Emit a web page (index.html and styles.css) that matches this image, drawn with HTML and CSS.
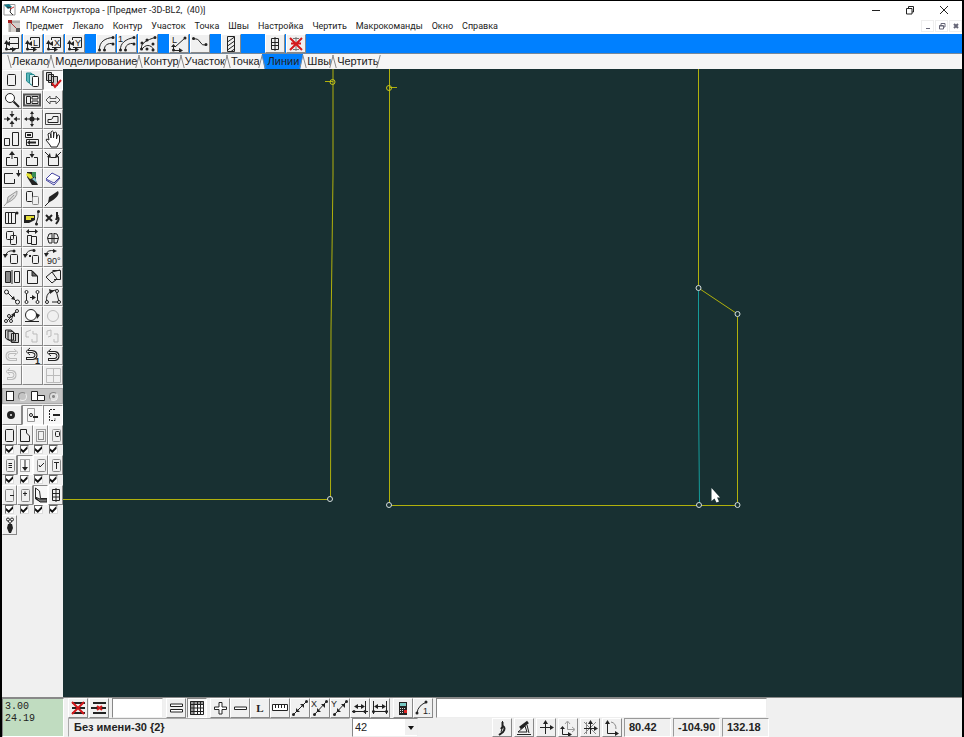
FILE: index.html
```html
<!DOCTYPE html>
<html lang="ru">
<head>
<meta charset="utf-8">
<title>АРМ Конструктора</title>
<link rel="stylesheet" href="styles.css">
</head>
<body>
<header class="titlebar">
  <svg class="app-icon" width="13" height="13" viewBox="0 0 13 13"><path d="M1 1.500H12V12H1Z" fill="#fff" stroke="#999"/><path d="M1 2L6 1L9 4L5 6Z" fill="#167b8a" stroke="none"/><path d="M4 4L8 5L7 9L10 12" stroke="#333"/><path d="M7 6L11 4" stroke="#c33"/></svg>
  <h1>АРМ Конструктора - [Предмет -3D-BL2,&nbsp; (40)]</h1>
  <div class="win-controls">
    <button aria-label="Свернуть"><svg width="10" height="10" viewBox="0 0 10 10"><path d="M1 5.500H9"/></svg></button>
    <button aria-label="Восстановить"><svg width="10" height="10" viewBox="0 0 10 10"><path d="M1.500 3.500H7V9H1.500ZM3.500 3V1.500H8.500V7H7"/></svg></button>
    <button aria-label="Закрыть"><svg width="10" height="10" viewBox="0 0 10 10"><path d="M1 1L9 9M9 1L1 9"/></svg></button>
  </div>
</header>
<nav class="menubar">
  <svg class="doc-icon" width="12" height="12" viewBox="0 0 12 12"><path d="M0 0H12V12H0Z" fill="#d4d0cc" stroke="none"/><path d="M2 12V2H12" stroke="#888"/><path d="M2 2L10 10" stroke="#a33"/><path d="M0 0H4V3H0Z" fill="#a22" stroke="none"/><path d="M8 8H12V12H8Z" fill="#555" stroke="none"/></svg>
  <a href="#">Предмет</a><a href="#">Лекало</a><a href="#">Контур</a><a href="#">Участок</a><a href="#">Точка</a><a href="#">Швы</a><a href="#">Настройка</a><a href="#">Чертить</a><a href="#">Макрокоманды</a><a href="#">Окно</a><a href="#">Справка</a>
  <div class="mdi-controls">
    <button aria-label="Свернуть окно"><svg width="8" height="8" viewBox="0 0 8 8"><path d="M2 6.500H6"/></svg></button>
    <button aria-label="Восстановить окно"><svg width="8" height="8" viewBox="0 0 8 8"><path d="M1.500 3.500H5.500V7H1.500ZM3 3V1.500H7V5H6M1.500 4H5"/></svg></button>
    <button aria-label="Закрыть окно"><svg width="8" height="8" viewBox="0 0 8 8"><path d="M2 2L6 6M6 2L2 6" stroke-width="2"/></svg></button>
  </div>
</nav>
<div class="toolbar">
  <div class="group">
    <button class="btn" aria-label="Линия"><svg viewBox="0 0 18 18"><path d="M6.500 5V2.500H15.500V13.500H7M7 8.500H15M3.500 7V14.500H9"/><path class="f" d="M3 9L7 6V11ZM1 9L3.500 5L6 9ZM9 12L13 14.500L9 17Z"/><path class="d" d="M3.500 14h0"/></svg></button>
    <button class="btn" aria-label="Линия L"><svg viewBox="0 0 18 18"><path d="M6.500 5V2.500H15.500V12.500H7M3.500 7V14.500H9"/><text x="9" y="11">L</text><path class="f" d="M4 9L8 6V11ZM1 9L3.500 5L6 9ZM9 12L13 14.500L9 17Z"/><path class="d" d="M3.500 14h0"/></svg></button>
    <button class="btn" aria-label="Линия X"><svg viewBox="0 0 18 18"><path d="M6.500 5V2.500H15.500V12.500H7M3.500 7V14.500H9"/><text x="9" y="11">X</text><path class="f" d="M4 9L8 6V11ZM1 9L3.500 5L6 9ZM9 12L13 14.500L9 17Z"/><path class="d" d="M3.500 14h0"/></svg></button>
    <button class="btn" aria-label="Линия Y"><svg viewBox="0 0 18 18"><path d="M6.500 5V2.500H15.500V12.500H7M3.500 7V14.500H9"/><text x="9" y="11">Y</text><path class="f" d="M4 9L8 6V11ZM1 9L3.500 5L6 9ZM9 12L13 14.500L9 17Z"/><path class="d" d="M3.500 14h0"/></svg></button>
  </div>
  <div class="group">
    <button class="btn" aria-label="Дуга"><svg viewBox="0 0 18 18"><path d="M2.500 15C2 7 8 3 16 2.500M7.500 15C7 10 11 8 16 8.500"/><path class="d" d="M2.500 15h0M7.500 15h0M16 2.500h0M16 9h0"/></svg></button>
    <button class="btn" aria-label="Дуга 1"><svg viewBox="0 0 18 18"><path d="M2.500 15C2 8 8 4 16 2.500M7.500 15C7 10 11 8 16 8.500"/><text x="0" y="7">1</text><path class="d" d="M2.500 15h0M7.500 15h0M16 2.500h0M16 9h0"/></svg></button>
    <button class="btn" aria-label="Дуга по точкам"><svg viewBox="0 0 18 18"><path d="M2.500 13C2 8 8 5 16 2.500M2.500 15C6 9 12 9 15 15"/><path class="d" d="M2.500 14h0M8 14h0M16 2.500h0M14 9h0M14 15h0M3 8h0M8 5h0"/></svg></button>
  </div>
  <div class="group">
    <button class="btn" aria-label="Отрезок по длине"><svg viewBox="0 0 18 18"><path d="M15 3L5 12M3.500 10V15.500H9"/><text x="2" y="8">L</text><path class="f" d="M9 13L13 15.500L9 18ZM1 12L3.500 9L6 12Z"/><path class="d" d="M15 3h0M3.500 15h0"/></svg></button>
    <button class="btn" aria-label="Отрезок"><svg viewBox="0 0 18 18"><path d="M2 4Q7 3 9 7T15 10"/><path class="d" d="M2.500 3.500h0M15 9.500h0"/></svg></button>
  </div>
  <div class="group">
    <button class="btn" aria-label="Штриховка"><svg viewBox="0 0 18 18"><path d="M5.500 1.500H12.500V16.500H5.500ZM5.500 7L12.500 2M5.500 11L12.500 6M5.500 15L12.500 10M9 16.500L12.500 14"/></svg></button>
  </div>
  <div class="group last">
    <button class="btn" aria-label="Сетка"><svg viewBox="0 0 18 18"><path d="M5.500 3.500H12.500V14.500H5.500ZM9 2V16M5 7.500H13M5 10.500H13"/></svg></button>
    <button class="btn" aria-label="Удалить сетку"><svg viewBox="0 0 18 18"><path stroke="#777" d="M6 3.500H12M6 14.500H12M9 2V16"/><path class="red" d="M3 3L15 15M15 3L3 15M4 8.500H14"/></svg></button>
  </div>
</div>
<nav class="tabs">
  <a href="#">Лекало</a><a href="#">Моделирование</a><a href="#">Контур</a><a href="#">Участок</a><a href="#">Точка</a><a href="#" class="active">Линии</a><a href="#">Швы</a><a href="#">Чертить</a>
</nav>
<main class="work">
  <aside class="palette">
    <div class="tools">
      <button class="btn" aria-label="Деталь"><svg viewBox="0 0 18 18"><rect x="4.500" y="3.500" width="8" height="11" rx="1"/></svg></button>
      <button class="btn" aria-label="Детали"><svg viewBox="0 0 18 18"><path fill="#5fb8bb" stroke="#268b90" d="M3.500 2H8L10.500 4V12H6L3.500 10Z"/><path fill="#d8f0f0" stroke="#268b90" d="M6.500 3.500H11L12.500 6V14H8L6.500 12Z"/><rect x="9.500" y="5.500" width="6" height="10" rx="1" fill="#fff"/></svg></button>
      <button class="btn pressed" aria-label="Выбор деталей"><svg viewBox="0 0 18 18"><path fill="#ccc" d="M2.500 1.500H7.500V9.500H2.500ZM4.500 3.500H9.500V11.500H4.500ZM7.500 5.500H13.500V14.500H7.500Z"/><path class="red" d="M8 12L11 16L17 9"/></svg></button>

      <button class="btn" aria-label="Лупа"><svg viewBox="0 0 18 18"><circle cx="7" cy="7" r="4.500" fill="#fff"/><path d="M10.500 10.500L16 16" stroke-width="2"/></svg></button>
      <button class="btn" aria-label="Раскладка"><svg viewBox="0 0 18 18"><path stroke-width="2" stroke="#555" d="M1 3.500H17V14.500H1Z"/><path d="M3.500 5.500H7.500V12.500H3.500ZM9 5.500H15V8H9ZM9 10H15V12.500H9Z"/></svg></button>
      <button class="btn" aria-label="Ширина"><svg viewBox="0 0 18 18"><path stroke="#555" d="M2 9L6 5V7.500H12V5L16 9L12 13V10.500H6V13Z"/></svg></button>

      <button class="btn" aria-label="Сжать"><svg viewBox="0 0 18 18"><path d="M9 1V5M9 13V17M1 9H5M13 9H17"/><path class="f" d="M6.500 4H11.500L9 7.500ZM6.500 14H11.500L9 10.500ZM4 6.500V11.500L7.500 9ZM14 6.500V11.500L10.500 9Z"/></svg></button>
      <button class="btn" aria-label="Развернуть"><svg viewBox="0 0 18 18"><path d="M9 3V15M3 9H15"/><circle class="f" cx="9" cy="9" r="2.500"/><path class="f" d="M7 4H11L9 1ZM7 14H11L9 17ZM4 7V11L1 9ZM14 7V11L17 9Z"/></svg></button>
      <button class="btn" aria-label="Вид"><svg viewBox="0 0 18 18"><path stroke="#444" d="M1.500 3.500H16.500V14.500H1.500Z"/><path d="M4 12.500V9.500H7Q9 9 9 6.500H14V12.500Z"/></svg></button>

      <button class="btn" aria-label="Масштаб"><svg viewBox="0 0 18 18"><path d="M1.500 8.500H6.500V15.500H1.500ZM9.500 2.500H15.500V15.500H9.500Z"/></svg></button>
      <button class="btn" aria-label="Сдвиг"><svg viewBox="0 0 18 18"><path d="M2.500 2.500H9.500V7.500H2.500ZM3.500 9.500H15.500V15.500H3.500Z"/><path stroke-width="2" d="M4 5H8M6 12.500H13"/><path class="f" d="M7 10V15L4 12.500Z"/></svg></button>
      <button class="btn" aria-label="Рука"><svg viewBox="0 0 18 18"><path fill="#fff" d="M6 15L2 10Q2 8 5 10L4 4Q5 2 6.500 4L7 8V2Q8.500 0 9.500 2V8L10 3Q12 1 12.500 3V9L13.500 5Q15 4 15.500 6V12L13 17H7Z"/></svg></button>

      <button class="btn" aria-label="Вверх"><svg viewBox="0 0 18 18"><path d="M7 7.500H3.500V15.500H14.500V7.500H11M9 4V9"/><path class="f" d="M6 5L9 1L12 5Z"/></svg></button>
      <button class="btn" aria-label="Вниз"><svg viewBox="0 0 18 18"><path d="M7 7.500H3.500V15.500H14.500V7.500H11M9 1V5"/><path class="f" d="M6.500 4H11.500L9 8Z"/></svg></button>
      <button class="btn" aria-label="Внутрь"><svg viewBox="0 0 18 18"><path d="M4.500 7V15.500H14.500V7M7 7.500H12M1 2L6 7M17 2L12 7"/><path class="f" d="M7 8L3 7L6 3ZM11 8L15 7L12 3Z"/></svg></button>

      <button class="btn" aria-label="Опустить"><svg viewBox="0 0 18 18"><path d="M10 4.500H1.500V14.500H11.500V10M15.500 1V6"/><path class="f" d="M13 4H18L15.500 8Z"/></svg></button>
      <button class="btn" aria-label="Цвет"><svg viewBox="0 0 18 18"><path class="f" d="M4 3H13V12L15 16H9L4 8Z"/><path fill="#e5e234" stroke="none" d="M4 4L8 5L10 9L7 10L3 6Z"/><path fill="#3a8b55" stroke="none" d="M9 3H13V8H9Z"/><path fill="#87c6d1" stroke="none" d="M9 10L12 8L14 14Z"/></svg></button>
      <button class="btn" aria-label="Книга"><svg viewBox="0 0 18 18"><path fill="#fff" stroke="#4444a0" d="M2 10L8 4L16 8L10 14ZM2 11L10 16L16 9"/></svg></button>

      <button class="btn" aria-label="Перо серое"><svg viewBox="0 0 18 18"><path stroke="#999" fill="#ddd" d="M4 14L5 8L14 2Q15 9 4 14ZM1 17L11 6"/></svg></button>
      <button class="btn" aria-label="Копия"><svg viewBox="0 0 18 18"><rect x="3.500" y="2.500" width="6" height="10" rx="1"/><rect x="9.500" y="7.500" width="6" height="8" rx="1" stroke="#888"/></svg></button>
      <button class="btn" aria-label="Перо"><svg viewBox="0 0 18 18"><path class="f" d="M4 14L5 8L14 2Q17 7 4 14Z"/><path d="M1 17L8 10"/></svg></button>

      <button class="btn" aria-label="Сгиб"><svg viewBox="0 0 18 18"><path d="M2.500 3.500H12.500V14.500H2.500ZM5.500 3V15M8.500 3V15"/><path class="d" d="M14 4h0"/></svg></button>
      <button class="btn" aria-label="Указать"><svg viewBox="0 0 18 18"><path class="f" d="M1 6H12V11L6 14H1Z"/><path fill="#e4dd37" stroke="none" d="M3 7H11V9H8V11H3Z"/><path d="M15 3V8L13 15"/><path class="d" d="M15.500 2.500h0M13.500 15h0"/></svg></button>
      <button class="btn" aria-label="Символы"><svg viewBox="0 0 18 18"><path stroke-width="2" d="M2 6L8 12M8 6L2 12"/><path stroke-width="2" d="M13 3V9M12 8Q16 8 14 12L12 15M14 6L12 11"/></svg></button>

      <button class="btn" aria-label="Объединить"><svg viewBox="0 0 18 18"><rect x="3.500" y="2.500" width="7" height="8" rx="1"/><rect x="7.500" y="6.500" width="6" height="9" rx="1"/></svg></button>
      <button class="btn" aria-label="Раздвинуть"><svg viewBox="0 0 18 18"><path d="M4.500 6.500H8.500V14.500H4.500ZM8.500 7.500H13.500V15.500H8.500ZM4 2.500H14"/><path class="f" d="M6 0V5L3 2.500ZM12 0V5L15 2.500Z"/></svg></button>
      <button class="btn" aria-label="Симметрия"><svg viewBox="0 0 18 18"><path d="M8 4.500L5 5L3.500 9L5 14H8V4M10 4.500L13 5L14.500 9L13 14H10V4M4 9.500H14"/></svg></button>

      <button class="btn" aria-label="Поворот"><svg viewBox="0 0 18 18"><rect x="7.500" y="6.500" width="7" height="9" rx="1"/><path d="M3 7Q4 2 11 3"/><path class="f" d="M0 6H5L2 10Z"/><path class="d" d="M11 3h0"/></svg></button>
      <button class="btn" aria-label="Поворот точки"><svg viewBox="0 0 18 18"><rect x="9.500" y="7.500" width="6" height="8" rx="1"/><path d="M3 7Q4 2 11 2"/><path class="f" d="M0 6H5L2 10ZM6 7H8V9H6Z"/><path class="d" d="M11 2.500h0"/></svg></button>
      <button class="btn" aria-label="Поворот 90"><svg viewBox="0 0 18 18"><path d="M2 7Q3 1 11 3"/><path class="f" d="M0 5H5L2 9ZM9 1L13 3L9 5Z"/><text x="3" y="16">90°</text></svg></button>

      <button class="btn" aria-label="Зеркало"><svg viewBox="0 0 18 18"><path fill="#888" d="M2.500 3.500H7.500V14.500H2.500Z"/><path d="M9 2V16M11.500 3.500H16.500V14.500H11.500Z"/></svg></button>
      <button class="btn" aria-label="Угол"><svg viewBox="0 0 18 18"><path d="M4.500 2.500H9L14.500 8V15.500H4.500Z"/><path fill="#666" d="M9 3L14 8H9Z"/></svg></button>
      <button class="btn" aria-label="Наклон"><svg viewBox="0 0 18 18"><path d="M8.500 2.500H16.500V11.500H10M2 9L8 4L13 11L8 15ZM8 4L16 2"/></svg></button>

      <button class="btn" aria-label="Точка на линии"><svg viewBox="0 0 18 18"><path d="M4 4L15 15"/><circle cx="3.500" cy="4" r="2" fill="#fff"/><circle cx="14.500" cy="14" r="2" fill="#fff"/><path class="f" d="M8 11L12 12L11 8Z"/></svg></button>
      <button class="btn" aria-label="Перенос точек"><svg viewBox="0 0 18 18"><path d="M3.500 3V15M7 9.500H12M14.500 3V15"/><g fill="#fff"><circle cx="3.500" cy="4" r="1.500"/><circle cx="3.500" cy="14" r="1.500"/><circle cx="14.500" cy="4" r="1.500"/><circle cx="14.500" cy="14" r="1.500"/></g><path class="f" d="M9 7L13 9.500L9 12Z"/></svg></button>
      <button class="btn" aria-label="Кривая"><svg viewBox="0 0 18 18"><path d="M3 14Q1 7 7 3L12 2L15 14H8"/><g fill="#fff"><circle cx="3" cy="14" r="1.500"/><circle cx="15" cy="14" r="1.500"/><circle cx="13" cy="3" r="1.500"/></g><path class="f" d="M5 1L10 3L6 6Z"/></svg></button>

      <button class="btn" aria-label="Вставить точки"><svg viewBox="0 0 18 18"><path d="M3 15L14 4M8 14L10 8"/><g fill="#fff"><circle cx="3" cy="14" r="1.500"/><circle cx="8" cy="14" r="1.500"/><circle cx="6" cy="9" r="1.500"/><circle cx="14" cy="4" r="1.500"/></g><path class="f" d="M8 8L12 10L12 5Z"/></svg></button>
      <button class="btn" aria-label="Окружность"><svg viewBox="0 0 18 18"><circle cx="8" cy="8" r="5.500" fill="#fff"/><path d="M2 14.500H16"/><path class="f" d="M13 6L17 8L14 12Z"/></svg></button>
      <button class="btn" aria-label="Круг"><svg viewBox="0 0 18 18"><circle cx="9" cy="9" r="5.500" stroke="#bbb"/></svg></button>

      <button class="btn" aria-label="Слои"><svg viewBox="0 0 18 18"><path fill="#ccc" d="M2.500 3H8L10.500 5V13H5L2.500 11ZM5 4L10 4.500L12.500 7V14H7L5 12ZM8.500 6.500H15.500V15.500H8.500Z"/></svg></button>
      <button class="btn faded" aria-label="Разрезать"><svg viewBox="0 0 18 18"><path d="M8 3L3 5V10H6M10 7H14V15H9V12M10 7V4"/></svg></button>
      <button class="btn faded" aria-label="Соединить"><svg viewBox="0 0 18 18"><path d="M3 8V4L7 3V9L4 10M10 7H14V15H10V12"/></svg></button>

      <button class="btn faded" aria-label="Вернуть"><svg viewBox="0 0 18 18"><path stroke-width="3" d="M13 5.500H7Q4 6 4 9T7 12.500H14"/><path class="core" d="M13 5.500H7Q4 6 4 9T7 12.500H13"/><path d="M11 2L15 5.500L11 9"/></svg></button>
      <button class="btn" aria-label="Отменить одно"><svg viewBox="0 0 18 18"><path stroke-width="3" d="M5 4.500H9Q13 5 13 8T10 11.500H3"/><path class="core" d="M5 4.500H9Q13 5 13 8T10 11.500H4"/><path d="M7 1L3 4.500L7 8"/><text class="b" x="12" y="17">1</text></svg></button>
      <button class="btn" aria-label="Отменить"><svg viewBox="0 0 18 18"><path stroke-width="3" d="M5 5.500H11Q14 6 14 9T11 12.500H4"/><path class="core" d="M5 5.500H11Q14 6 14 9T11 12.500H5"/><path d="M7 2L3 5.500L7 9"/></svg></button>

      <button class="btn faded" aria-label="Назад"><svg viewBox="0 0 18 18"><path stroke-width="3" d="M5 5.500H9Q12 6 12 9T9 12.500H4"/><path class="core" d="M5 5.500H9Q12 6 12 9T9 12.500H5"/><path d="M7 2L3 5.500L7 9"/></svg></button>
      <button class="btn" aria-label="Пусто"></button>
      <button class="btn faded" aria-label="Окна"><svg viewBox="0 0 18 18"><path d="M2.500 2.500H16.500V16.500H2.500ZM9.500 2V17M2 9.500H17"/></svg></button>
    </div>
    <div class="modes">
      <svg width="10" height="12" viewBox="0 0 10 12"><rect x="1.500" y="1.500" width="7" height="9" fill="#fff"/></svg>
      <input type="radio" name="mode" aria-label="Одна деталь">
      <svg width="16" height="12" viewBox="0 0 16 12"><path fill="#fff" d="M1.500 1.500H7.500V10.500H1.500ZM7.500 5.500H14.500V10.500H7.500Z"/></svg>
      <input type="radio" name="mode" aria-label="Группа деталей" checked>
    </div>
    <div class="tools three">
      <button class="btn" aria-label="Узел"><svg viewBox="0 0 18 18"><circle cx="8" cy="9" r="2.500" stroke-width="3"/></svg></button>
      <button class="btn pressed" aria-label="Метка"><svg viewBox="0 0 18 18"><path stroke="#999" d="M4.500 2.500H11.500V15.500H4.500Z"/><circle cx="8" cy="9" r="1.500"/><path stroke-width="2" d="M10 11H15"/></svg></button>
      <button class="btn pressed" aria-label="Контур"><svg viewBox="0 0 18 18"><path stroke-dasharray="2 1" d="M11 3.500H5.500V14.500H11V12"/><path stroke-width="2" d="M9 9H16"/></svg></button>
    </div>
    <div class="tools four">
      <button class="btn" aria-label="Контур детали"><svg viewBox="0 0 14 18"><rect x="2.500" y="3.500" width="8" height="12" rx="1"/></svg></button>
      <button class="btn" aria-label="Вырез"><svg viewBox="0 0 14 18"><path d="M2.500 3.500H8.500V7L11.500 10V15.500H2.500Z"/></svg></button>
      <button class="btn" aria-label="Шов"><svg viewBox="0 0 14 18"><rect x="2.500" y="3.500" width="9" height="12" stroke="#999"/><rect x="4.500" y="5.500" width="5" height="8" stroke-dasharray="1 1"/></svg></button>
      <button class="btn" aria-label="Карман"><svg viewBox="0 0 14 18"><rect x="3.500" y="3.500" width="8" height="12" rx="1" stroke="#999"/><rect x="6.500" y="5.500" width="4" height="5" rx="1"/></svg></button>
    </div>
    <div class="checks"><input type="checkbox" checked aria-label="Показать контур"><input type="checkbox" checked aria-label="Показать вырез"><input type="checkbox" checked aria-label="Показать шов"><input type="checkbox" checked aria-label="Показать карман"></div>
    <div class="tools four">
      <button class="btn" aria-label="Надпись"><svg viewBox="0 0 14 18"><rect x="3.500" y="3.500" width="8" height="12" rx="1" stroke="#888"/><path d="M5.500 7.500H9M5.500 9.500H9M5.500 11.500H9"/></svg></button>
      <button class="btn pressed" aria-label="Долевая"><svg viewBox="0 0 14 18"><rect x="2.500" y="3.500" width="9" height="12" stroke="#aaa"/><path d="M7 4V12"/><path class="f" d="M4 11H10L7 15Z"/></svg></button>
      <button class="btn" aria-label="Надсечка"><svg viewBox="0 0 14 18"><rect x="3.500" y="3.500" width="8" height="12" rx="1" stroke="#888"/><path d="M5 9L6 11L8 9L10 7"/></svg></button>
      <button class="btn" aria-label="Текст"><svg viewBox="0 0 14 18"><rect x="3.500" y="3.500" width="8" height="12" rx="1" stroke="#888"/><path d="M5 6.500H10M7.500 6V13"/></svg></button>
    </div>
    <div class="checks"><input type="checkbox" checked aria-label="Показать надпись"><input type="checkbox" checked aria-label="Показать долевую"><input type="checkbox" checked aria-label="Показать надсечку"><input type="checkbox" checked aria-label="Показать текст"></div>
    <div class="tools four">
      <button class="btn" aria-label="Минус"><svg viewBox="0 0 14 18"><rect x="2.500" y="3.500" width="8" height="12" rx="1" stroke="#888"/><path d="M7 9.500H11"/></svg></button>
      <button class="btn" aria-label="Плюс"><svg viewBox="0 0 14 18"><rect x="3.500" y="3.500" width="8" height="12" rx="1" stroke="#888"/><path d="M5 7.500H9M7 5.500V10"/></svg></button>
      <button class="btn pressed" aria-label="Лист"><svg viewBox="0 0 14 18"><path d="M1.500 2V13L6 15.500H13V12.500H6.500L5.500 5Z"/><path fill="#777" d="M1 11L6 13H13V16H6Z"/></svg></button>
      <button class="btn" aria-label="Таблица"><svg viewBox="0 0 14 18"><path d="M3.500 3.500H10.500V14.500H3.500ZM7 2V16M3 7.500H11M3 11H11"/></svg></button>
    </div>
    <div class="checks"><input type="checkbox" checked aria-label="Показать минус"><input type="checkbox" checked aria-label="Показать плюс"><input type="checkbox" checked aria-label="Показать лист"><input type="checkbox" checked aria-label="Показать таблицу"></div>
    <div class="tools four">
      <button class="btn" aria-label="Инструмент"><svg viewBox="0 0 14 18"><circle cx="5" cy="3.500" r="1.500"/><circle cx="9" cy="3.500" r="1.500"/><path d="M5 5L8 9M9 5L6 9"/><path class="f" d="M5 8H9L10 12L8 17H6L4 12Z"/></svg></button>
    </div>
  </aside>
  <section class="canvas" aria-label="Чертёж">
    <svg width="100%" height="100%">
      <g transform="translate(-63 -69)">
        <g class="outline">
          <path d="M333 69V175L331 330L330.500 499"/>
          <path d="M328 499.500H63"/>
          <path d="M325 81.500H333"/>
          <path d="M389.500 69V505.500H737.500V314L698.500 288V69"/>
          <path d="M389 87.500H397"/>
        </g>
        <path class="seam" d="M698.500 290V398L699.500 503"/>
        <g class="nodes"><circle cx="330" cy="499" r="2.500"/><circle cx="389" cy="505" r="2.500"/><circle cx="699" cy="505" r="2.500"/><circle cx="737.500" cy="505" r="2.500"/><circle cx="737.500" cy="314" r="2.500"/><circle cx="698.500" cy="288" r="2.500"/></g>
        <g class="notches"><circle cx="332.500" cy="82" r="2.500"/><circle cx="389" cy="88" r="2.500"/></g>
        <path class="pointer" d="M711.500 488V501L714.500 498.500L716.500 502.500L719 501.500L717 497.500H720Z"/>
      </g>
    </svg>
  </section>
</main>
<footer class="bottom">
  <output class="coords">3.00<br>24.19</output>
  <div class="rows">
    <div class="row">
      <div class="group">
        <button class="btn" aria-label="Удалить всё"><svg viewBox="0 0 18 18"><path stroke-width="2" d="M3 4H16M3 9H16M3 14H16"/><path class="red" d="M3 3L15 15M15 3L3 15"/></svg></button>
        <button class="btn" aria-label="Удалить строку"><svg viewBox="0 0 18 18"><path stroke-width="2" d="M3 4H16M1 9H16M3 14H16"/><path class="red" d="M7 7L12 11M12 7L7 11"/></svg></button>
      </div>
      <input class="field short" type="text" aria-label="Значение">
      <div class="group">
        <button class="btn" aria-label="Равно"><svg viewBox="0 0 18 18"><path d="M3.500 5H15.500V7.500H3.500ZM3.500 10.500H15.500V13H3.500Z" fill="#fff"/></svg></button>
        <button class="btn pressed" aria-label="Таблица размеров"><svg viewBox="0 0 18 18"><path fill="#999" stroke="none" d="M2 2H6V16H2ZM2 2H16V5H2Z"/><path d="M2.500 2.500H15.500V15.500H2.500ZM2 5.500H16M2 9H16M2 12.500H16M6 2V16M9.500 2V16M12.500 2V16"/></svg></button>
      </div>
      <div class="group tight">
        <button class="btn" aria-label="Прибавить"><svg viewBox="0 0 18 18"><path fill="#fff" d="M8 3.500H11V8H15.500V10.500H11V15H8V10.500H3.500V8H8Z"/></svg></button>
        <button class="btn" aria-label="Вычесть"><svg viewBox="0 0 18 18"><path fill="#fff" d="M3.500 8H15.500V10.500H3.500Z"/></svg></button>
        <button class="btn letter">L</button>
        <button class="btn" aria-label="Линейка"><svg viewBox="0 0 18 18"><path fill="#fff" d="M1.500 5.500H16.500V11.500H1.500ZM4.500 6V9M7.500 6V9M10.500 6V9M13.500 6V9"/></svg></button>
        <button class="btn" aria-label="Расстояние"><svg viewBox="0 0 18 18"><path d="M3 15L15 3"/><path class="f" d="M5 9V13H9ZM9 5H13V9Z"/><path class="d" d="M2.500 15.500h0M15.500 2.500h0"/></svg></button>
        <button class="btn" aria-label="Расстояние X"><svg viewBox="0 0 18 18"><path d="M4 15L15 3"/><text x="0" y="8">X</text><path class="f" d="M6 9V13H10ZM10 5H14V9Z"/><path class="d" d="M3.500 15.500h0M15.500 2.500h0"/></svg></button>
        <button class="btn" aria-label="Расстояние Y"><svg viewBox="0 0 18 18"><path d="M4 15L15 3"/><text x="0" y="8">Y</text><path class="f" d="M6 9V13H10ZM10 5H14V9Z"/><path class="d" d="M3.500 15.500h0M15.500 2.500h0"/></svg></button>
        <button class="btn" aria-label="Расстояние до линии"><svg viewBox="0 0 18 18"><path d="M14.500 2V15M5 7.500H13M1 12.500H17"/><path class="f" d="M7 5V10L3 7.500ZM10 5V10L14 7.500Z"/><path class="d" d="M3 12.500h0M14 12.500h0"/></svg></button>
        <button class="btn" aria-label="Между линиями"><svg viewBox="0 0 18 18"><path d="M2.500 2V15M15.500 2V15M4 7.500H14M1 12.500H17"/><path class="f" d="M7 5V10L3 7.500ZM11 5V10L15 7.500Z"/><path class="d" d="M2.500 12.500h0M15.500 12.500h0"/></svg></button>
      </div>
      <div class="group tight">
        <button class="btn" aria-label="Калькулятор"><svg viewBox="0 0 18 18"><path class="f" d="M5 3H13V16H5Z"/><path fill="#76c8c3" stroke="none" d="M6 4H12V7H6Z"/><path stroke="#ddd" stroke-dasharray="1 1" d="M6 9.500H12M6 11.500H12M6 13.500H10"/><path fill="#d22" stroke="none" d="M10 11H13V14H10Z"/></svg></button>
        <button class="btn" aria-label="Дуга с номером"><svg viewBox="0 0 18 18"><path d="M3 14Q4 6 13 3"/><path class="d" d="M3 14h0M12 3h0"/><text x="9" y="15">1.</text></svg></button>
      </div>
      <input class="field long" type="text" aria-label="Команда">
    </div>
    <div class="row second">
      <output class="name">Без имени-30 {2}</output>
      <span class="combo"><select aria-label="Размер"><option>42</option></select></span>
      <div class="group axes">
        <button class="btn" aria-label="Запись"><svg viewBox="0 0 18 18"><path d="M9.500 2V8L8 13"/><path stroke-width="2" d="M9.500 3V7M8 10L10 7Q13 9 10 13L6 16"/></svg></button>
        <button class="btn" aria-label="Прибор"><svg viewBox="0 0 18 18"><path stroke-width="3" d="M5 9L13 3"/><path d="M12 6L14 14M2 15.500H16M3 13L10 7L12 13H3"/></svg></button>
        <button class="btn" aria-label="Оси"><svg viewBox="0 0 18 18"><path d="M8.500 4V15M3 8.500H14"/><path class="f" d="M6 5L8.500 1L11 5ZM13 6L17 8.500L13 11Z"/></svg></button>
        <button class="btn" aria-label="Перенос осей"><svg viewBox="0 0 18 18"><path stroke="#999" d="M8.500 3V10.500H15M6 5L8.500 2L11 5M13 8L16 10.500L13 13"/><path d="M3.500 10V15.500H10"/><path class="f" d="M1 10L3.500 7L6 10ZM9 13L13 15.500L9 18Z"/></svg></button>
        <button class="btn" aria-label="Центр осей"><svg viewBox="0 0 18 18"><path stroke="#888" d="M3 3L15 15M15 3L3 15M5.500 3V15"/><path d="M9.500 4V15M3 9.500H14"/><path class="f" d="M7 5L9.500 1L12 5ZM13 7L17 9.500L13 12Z"/></svg></button>
        <button class="btn" aria-label="Поворот осей"><svg viewBox="0 0 18 18"><path d="M4.500 5V14.500H13"/><path stroke="#888" d="M8 3Q13 4 13 10"/><path class="f" d="M2 5L4.500 1L7 5ZM12 12L16 14.500L12 17Z"/></svg></button>
      </div>
      <output class="num">80.42</output><output class="num">-104.90</output><output class="num">132.18</output>
    </div>
  </div>
</footer>
</body>
</html>
```
FILE: styles.css
```css
* { box-sizing: border-box; }

body {
  margin: 0;
  height: 100vh;
  display: flex;
  flex-direction: column;
  overflow: hidden;
  background: #f0f0f0;
  border: solid #000;
  border-width: 1px 2px 0;
  color: #222;
  font: 11px/14px "Liberation Sans", sans-serif;
}

svg { display: block; fill: none; stroke: #222; }
a { color: inherit; text-decoration: none; }
button { font: inherit; color: inherit; padding: 0; border: 0; background: none; }

.titlebar, .menubar {
  display: flex;
  align-items: center;
  flex: none;
  height: 17px;
  background: #fff;
  font: 9px/12px Roboto, "Noto Sans", sans-serif;
}
.titlebar { gap: 4px; padding-left: 1px; }
.titlebar h1 { margin: 0; font: inherit; }
.win-controls { display: flex; gap: 24px; margin-left: auto; padding-right: 13px; }
.menubar { height: 16px; gap: 9px; padding-left: 6px; }
.doc-icon { margin-right: -3px; }
.mdi-controls { display: flex; gap: 1px; margin-left: auto; }
.mdi-controls button { display: grid; place-items: center; width: 13px; height: 12px; border: 1px solid #eee; }
.mdi-controls svg { stroke: #667; }

.toolbar {
  display: flex;
  flex: none;
  gap: 11px;
  height: 20px;
  background: #0080ff;
  border-bottom: 1px solid #789;
}
.group { display: flex; gap: 1px; }
.tight { gap: 0; }
.last { margin-left: 13px; }

.btn {
  display: grid;
  place-items: center;
  width: 20px;
  min-width: 0;
  min-height: 0;
  overflow: hidden;
  background: #f0f0f0;
  border: 1px solid;
  border-color: #fff #888 #888 #fff;
}
.btn svg { width: 18px; height: 18px; }
.btn text, .letter { font-family: "Liberation Sans", sans-serif; }
.btn text { font-size: 9px; fill: #222; stroke: none; }
.btn text.b { font-weight: bold; }
.pressed { background: #f8f8f8; border-color: #888 #fff #fff #888; }
.faded svg { stroke: #bbb; }
.f { fill: #222; stroke: none; }
.d { stroke-width: 3; stroke-linecap: round; }
.core { stroke: #f0f0f0; }
.red { stroke: #d3191c; stroke-width: 2; }

.tabs {
  display: flex;
  flex: none;
  height: 15px;
  padding-left: 6px;
  background: #f5f5f5;
  line-height: 15px;
}
.tabs a { position: relative; padding: 0 2px 0 4px; }
.tabs a::before, .tabs a::after {
  content: "";
  position: absolute;
  top: 1px;
  bottom: 1px;
  border-left: 1px solid #888;
}
.tabs a::before { left: 1px; transform: skewX(15deg); }
.tabs a::after { right: 1px; transform: skewX(-15deg); }
.tabs .active {
  padding: 0 4px 0 6px;
  background: #0080ff;
  clip-path: polygon(0 0, 100% 0, calc(100% - 3px) 100%, 3px 100%);
}

.work { flex: 1; display: flex; min-height: 0; }
.palette { flex: none; width: 61px; padding-top: 1px; }
.tools {
  display: grid;
  grid-template-columns: repeat(3, 1fr);
  grid-template-rows: repeat(16, 1fr);
  height: 315px;
}
.tools .btn { width: auto; }
.three { grid-template-rows: 20px; height: 20px; }
.four { grid-template-columns: repeat(4, 1fr); grid-template-rows: 20px; height: 20px; }
.four .btn svg { width: 14px; }

.modes {
  display: flex;
  align-items: center;
  justify-content: space-between;
  height: 16px;
  margin: 3px 0 1px;
  padding: 0 4px 0 2px;
  background: #c4c4c4;
  border: 1px solid #aaa;
}
.modes input {
  appearance: none;
  width: 9px;
  height: 9px;
  margin: 0;
  border: 1px solid;
  border-color: #888 #eee #eee #888;
  border-radius: 50%;
}
.modes input:checked { background: radial-gradient(#888 0 1px, #ddd 2px); }

.checks { display: grid; grid-template-columns: repeat(4, 1fr); height: 10px; padding-left: 3px; }
.checks input {
  appearance: none;
  width: 9px;
  height: 9px;
  margin: 0;
  background: #fff;
  border: 1px solid;
  border-color: #666 #ddd #ddd #666;
}
.checks input:checked::before {
  content: "";
  display: block;
  width: 7px;
  height: 7px;
  background: #111;
  clip-path: polygon(0 30%, 40% 60%, 100% 0, 100% 40%, 40% 100%, 0 65%);
}

.canvas { flex: 1; min-width: 0; overflow: hidden; background: #183032; }
.outline { stroke: #b0b00c; }
.seam { stroke: #159b9a; }
.nodes { fill: #183032; stroke: #d5dddd; }
.notches { stroke: #c4c51b; }
.pointer { fill: #fff; stroke: none; }

.bottom { display: flex; flex: none; gap: 4px; height: 40px; border-top: 1px solid #888; }
.coords {
  width: 62px;
  padding: 2px;
  background: #c0dcc0;
  border: 1px solid;
  border-color: #888 #fff #fff #888;
  font: 10px/12px "Liberation Mono", monospace;
}
.rows { flex: 1; min-width: 0; }
.row { display: flex; gap: 3px; height: 20px; }
.field { min-width: 0; background: #fff; border: 1px solid; border-color: #888 #eee #eee #888; }
.short { width: 51px; }
.long { width: 331px; }
.letter { font: bold 11px/14px "Liberation Serif", serif; }
.second { gap: 2px; height: 19px; font-weight: bold; line-height: 17px; }
.name { width: 282px; padding-left: 5px; border: 1px solid; border-color: #aaa #f0f0f0 #f0f0f0 #aaa; }
.combo { position: relative; width: 66px; border: 1px solid; border-color: #888 #eee #eee #888; background: #fff; }
.combo select {
  appearance: none;
  width: 100%;
  height: 16px;
  padding: 0 2px;
  border: 0;
  background: linear-gradient(#f0f0f0, #f0f0f0) right / 12px 100% no-repeat;
  color: #222;
  font: 11px/14px "Liberation Sans", sans-serif;
}
.combo::after {
  content: "";
  position: absolute;
  right: 3px;
  top: 7px;
  border: 3px solid transparent;
  border-top: 4px solid #111;
  border-bottom: 0;
  pointer-events: none;
}
.axes { gap: 2px; margin-left: 72px; }
.num { width: 47px; padding-left: 4px; border: 1px solid; border-color: #999 #fff #fff #999; white-space: nowrap; }
```
